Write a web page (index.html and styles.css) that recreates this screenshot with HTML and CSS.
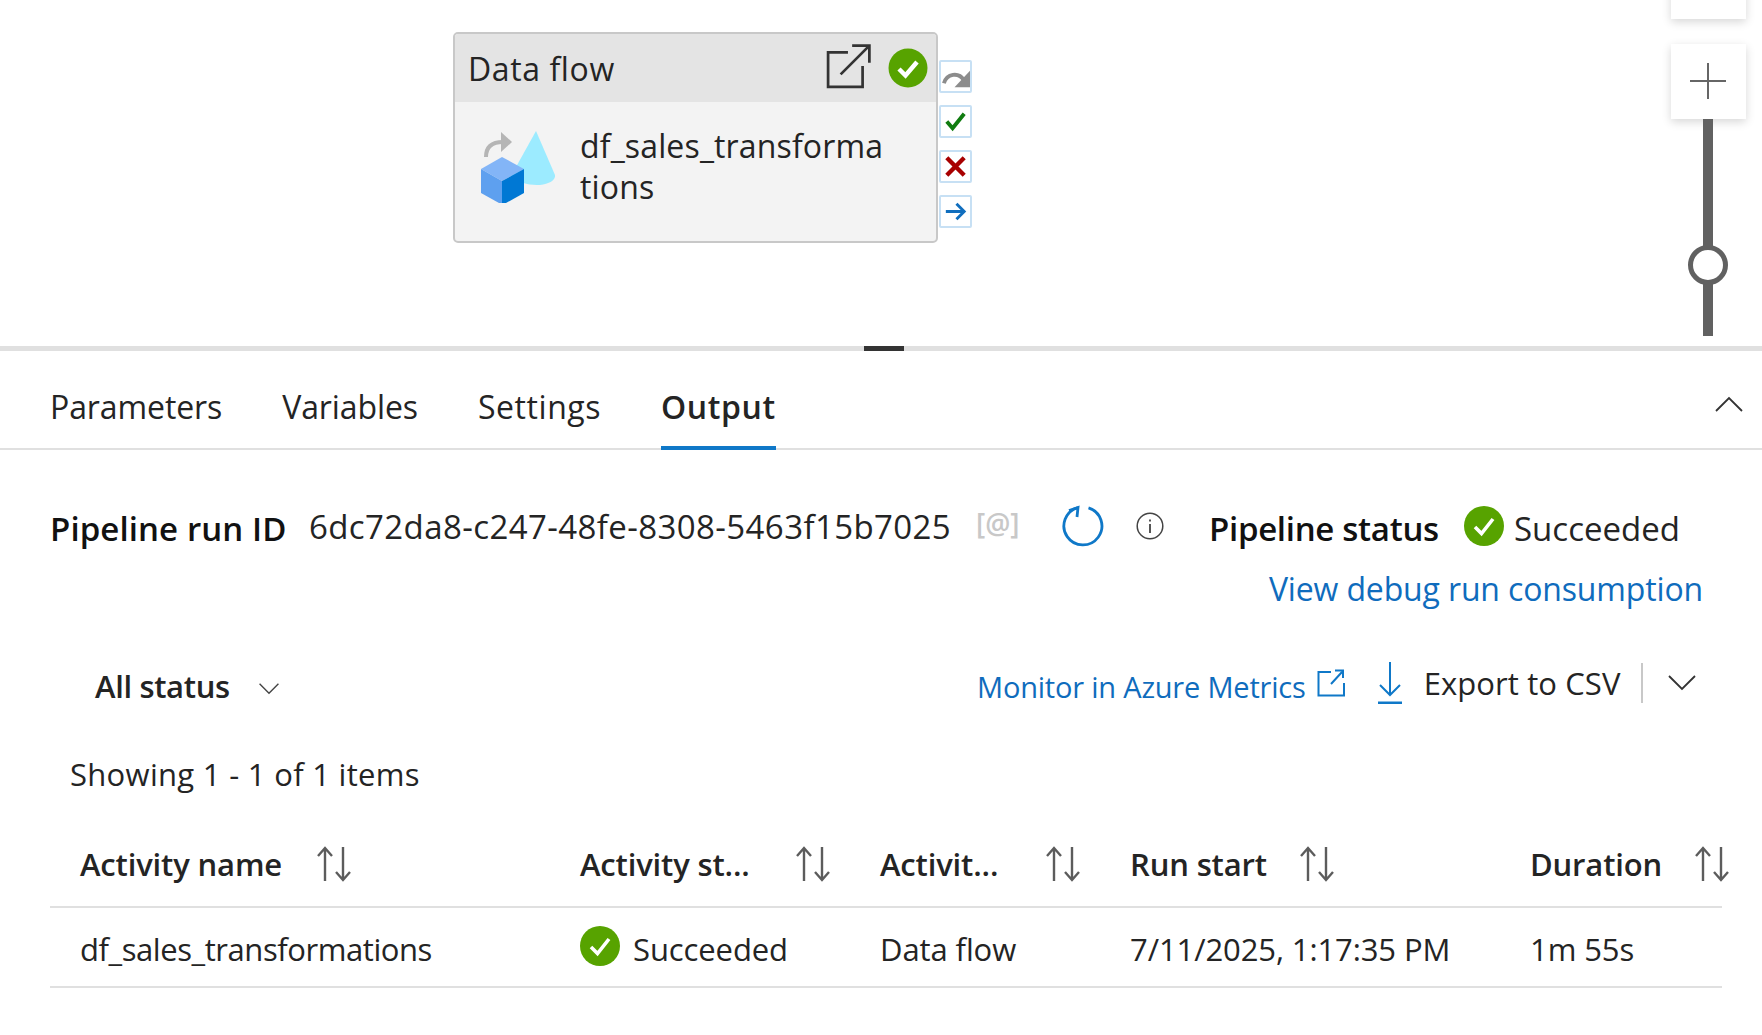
FILE: index.html
```html
<!DOCTYPE html>
<html lang="en">
<head>
<meta charset="UTF-8" />
<title>Pipeline run output</title>
<link rel="stylesheet" href="styles.css">
</head>
<body>

<section class="canvas">
  <div class="node">
    <div class="node-head">
      <span class="node-type">Data flow</span>
      <svg class="node-open" viewBox="0 0 44 44" fill="none" stroke="#333" stroke-width="2.6">
        <path d="M21 9H2v33h33V22"/>
        <path d="M14 30L41 3M25 2.500h16.500V19"/>
      </svg>
      <svg class="node-ok" viewBox="0 0 40 40">
        <circle cx="20" cy="20" r="19.500" fill="#57a300"/>
        <path d="M11 21l6.500 6.500L29 14" fill="none" stroke="#fff" stroke-width="4.500"/>
      </svg>
    </div>
    <div class="node-body">
      <svg class="node-icon" viewBox="0 0 74 72">
        <path d="M55 0L74 44c1 6-9 10-18 10-10 0-20-3-26-9z" fill="#9cebff"/>
        <path d="M5 26c0-10 6-15 17-15" fill="none" stroke="#b5b5b5" stroke-width="4"/>
        <path d="M20 1l11 10-11 10z" fill="#b5b5b5"/>
        <path d="M0 38L21 26l22 12-22 12z" fill="#83b5f7"/>
        <path d="M0 38l21 12v22h-3L0 62z" fill="#5ea0ef"/>
        <path d="M43 38L21 50v22h4l18-10z" fill="#0078d4"/>
      </svg>
      <span class="node-name">df_sales_transforma<br>tions</span>
    </div>
  </div>

  <div class="node-actions">
    <div class="action">
      <svg viewBox="0 0 30 30"><path d="M3 22c3-10 15-12 21-3" fill="none" stroke="#8c8c8c" stroke-width="4"/><path d="M30 9v17H14z" fill="#8c8c8c"/></svg>
    </div>
    <div class="action">
      <svg viewBox="0 0 30 30"><path d="M6 15l6 7L24 7" fill="none" stroke="#107c10" stroke-width="4"/></svg>
    </div>
    <div class="action">
      <svg viewBox="0 0 30 30"><path d="M6 6l18 18M24 6L6 24" fill="none" stroke="#a80000" stroke-width="4.500"/></svg>
    </div>
    <div class="action">
      <svg viewBox="0 0 30 30"><path d="M5 15h19M16 7l8 8-8 8" fill="none" stroke="#106ebe" stroke-width="3"/></svg>
    </div>
  </div>

  <div class="zoom-btn zoom-btn-top"></div>
  <div class="zoom-btn zoom-btn-plus">
    <svg viewBox="0 0 36 36"><path d="M18 0v36M0 18h36" stroke="#666" stroke-width="2"/></svg>
  </div>
  <div class="zoom-track"></div>
  <div class="zoom-thumb"></div>
</section>

<div class="splitter"><span class="splitter-handle"></span></div>

<nav class="tabs">
  <a class="tab">Parameters</a>
  <a class="tab">Variables</a>
  <a class="tab tab-settings">Settings</a>
  <a class="tab tab-active">Output</a>
  <svg class="tabs-collapse" viewBox="0 0 28 16"><path d="M1 15L14 2l13 13" fill="none" stroke="#333" stroke-width="1.800"/></svg>
</nav>

<main class="panel">
  <div class="run-row">
    <span class="label run-label">Pipeline run ID</span>
    <span class="run-id">6dc72da8-c247-48fe-8308-5463f15b7025</span>
    <span class="copy-token">[@]</span>
    <svg class="refresh" viewBox="0 0 42 42" fill="none" stroke="#0f78c8" stroke-width="2.800">
      <path d="M26.500 2.800A19 19 0 1 1 16 2.600"/>
      <path d="M7 5.500L16 2.500 15 12"/>
    </svg>
    <svg class="info" viewBox="0 0 28 28" fill="none" stroke="#444" stroke-width="1.500">
      <circle cx="14" cy="14" r="12.800"/>
      <path d="M14 12v9M14 7.500v2" stroke-width="1.800"/>
    </svg>
    <span class="label status-label">Pipeline status</span>
    <svg class="ok-big" viewBox="0 0 40 40">
      <circle cx="20" cy="20" r="20" fill="#57a300"/>
      <path d="M11 21l6.500 6.500L29 13" fill="none" stroke="#fff" stroke-width="3.600"/>
    </svg>
    <span class="status-text">Succeeded</span>
  </div>

  <div class="debug-row">
    <a class="link debug-link">View debug run consumption</a>
  </div>

  <div class="toolbar">
    <span class="filter">All status</span>
    <svg class="chev filter-chev" viewBox="0 0 24 14"><path d="M1 1l11 11L23 1" fill="none" stroke="#444" stroke-width="1.600"/></svg>
    <a class="link metrics-link">Monitor in Azure Metrics</a>
    <svg class="ext-icon" viewBox="0 0 28 28" fill="none" stroke="#0f78c8" stroke-width="2">
      <path d="M14 3H1.500v23.500H27V14M14 15L25 3M18 1.500h8V9" />
    </svg>
    <svg class="dl-icon" viewBox="0 0 26 42" fill="none" stroke="#0f78c8" stroke-width="2">
      <path d="M13 0v33M3 23l10 10 10-10"/>
      <path d="M1 41h24" stroke-width="3"/>
    </svg>
    <span class="export">Export to CSV</span>
    <span class="toolbar-sep"></span>
    <svg class="chev export-chev" viewBox="0 0 28 16"><path d="M1 1l13 13L27 1" fill="none" stroke="#333" stroke-width="1.800"/></svg>
  </div>

  <p class="showing">Showing 1 - 1 of 1 items</p>

  <div class="grid grid-head">
    <div class="cell cell-head"><span class="head-text head-name">Activity name</span><svg class="sort" viewBox="0 0 36 36" fill="none" stroke="#5c5c5c" stroke-width="2.400"><path d="M9 35V2M2 10l7-8 7 8M27 1v33M20 26l7 8 7-8"/></svg></div>
    <div class="cell cell-head"><span class="head-text head-status">Activity st...</span><svg class="sort" viewBox="0 0 36 36" fill="none" stroke="#5c5c5c" stroke-width="2.400"><path d="M9 35V2M2 10l7-8 7 8M27 1v33M20 26l7 8 7-8"/></svg></div>
    <div class="cell cell-head"><span class="head-text head-type">Activit...</span><svg class="sort" viewBox="0 0 36 36" fill="none" stroke="#5c5c5c" stroke-width="2.400"><path d="M9 35V2M2 10l7-8 7 8M27 1v33M20 26l7 8 7-8"/></svg></div>
    <div class="cell cell-head"><span class="head-text head-start">Run start</span><svg class="sort" viewBox="0 0 36 36" fill="none" stroke="#5c5c5c" stroke-width="2.400"><path d="M9 35V2M2 10l7-8 7 8M27 1v33M20 26l7 8 7-8"/></svg></div>
    <div class="cell cell-head"><span class="head-text head-dur">Duration</span><svg class="sort" viewBox="0 0 36 36" fill="none" stroke="#5c5c5c" stroke-width="2.400"><path d="M9 35V2M2 10l7-8 7 8M27 1v33M20 26l7 8 7-8"/></svg></div>
  </div>
  <div class="grid grid-row">
    <div class="cell cell-name">df_sales_transformations</div>
    <div class="cell">
      <svg class="ok-small" viewBox="0 0 40 40">
        <circle cx="20" cy="20" r="20" fill="#57a300"/>
        <path d="M11 21l6.500 6.500L29 13" fill="none" stroke="#fff" stroke-width="3.600"/>
      </svg>
      Succeeded
    </div>
    <div class="cell">Data flow</div>
    <div class="cell">7/11/2025, 1:17:35 PM</div>
    <div class="cell">1m 55s</div>
  </div>
</main>

</body>
</html>
```

FILE: styles.css
```css
* {
  box-sizing: border-box;
}
html, body {
  margin: 0;
  height: 100%;
  overflow: hidden;
}
body {
  background: #fff;
  color: #242424;
  font-family: "Open Sans", "Noto Sans", sans-serif;
  font-size: 31px;
}

/* canvas */
.canvas {
  position: relative;
  height: 346px;
}
.node {
  position: absolute;
  left: 453px;
  top: 32px;
  width: 485px;
  height: 211px;
  border: 2px solid #c8c8c8;
  border-radius: 5px;
  background: #f3f3f3;
  overflow: hidden;
}
.node-head {
  display: flex;
  align-items: center;
  height: 68px;
  padding: 0 8px 0 13px;
  background: #e4e4e4;
}
.node-type {
  flex: 1;
  font-size: 32px;
  letter-spacing: 0.6px;
}
.node-open {
  width: 46px;
  height: 46px;
  margin: -4px 16px 0 0;
}
.node-ok {
  width: 40px;
  height: 40px;
}
.node-body {
  display: flex;
  padding: 23px 0 0 26px;
}
.node-icon {
  flex: none;
  width: 74px;
  height: 72px;
  margin-top: 6px;
}
.node-name {
  margin-left: 25px;
  font-size: 32px;
  line-height: 41px;
  letter-spacing: 0.15px;
}
.node-actions {
  position: absolute;
  left: 939px;
  top: 60px;
  display: flex;
  flex-direction: column;
  gap: 12px;
}
.action {
  width: 33px;
  height: 33px;
  border: 2px solid #c7e0f4;
  border-radius: 2px;
  background: #fff;
}
.action svg {
  display: block;
  width: 29px;
  height: 29px;
  overflow: visible;
}
.zoom-btn {
  position: absolute;
  left: 1671px;
  width: 75px;
  background: #fff;
  box-shadow: 0 3px 9px rgba(0, 0, 0, 0.16);
}
.zoom-btn-top {
  top: -20px;
  height: 39px;
}
.zoom-btn-plus {
  top: 44px;
  height: 75px;
  padding: 0 2px 2px 0;
  display: flex;
  align-items: center;
  justify-content: center;
}
.zoom-btn-plus svg {
  width: 36px;
  height: 36px;
}
.zoom-track {
  position: absolute;
  left: 1703px;
  top: 119px;
  width: 10px;
  height: 217px;
  background: #616161;
}
.zoom-thumb {
  position: absolute;
  left: 1688px;
  top: 245px;
  width: 40px;
  height: 40px;
  border: 5px solid #616161;
  border-radius: 50%;
  background: #fff;
}

/* splitter */
.splitter {
  display: flex;
  justify-content: center;
  height: 5px;
  background: #e0e0e0;
}
.splitter-handle {
  width: 40px;
  height: 5px;
  margin-right: -6px;
  background: #333;
}

/* tabs */
.tabs {
  position: relative;
  display: flex;
  gap: 60px;
  height: 99px;
  padding-left: 50px;
  border-bottom: 2px solid #e0e0e0;
}
.tab {
  height: 99px;
  padding-top: 34px;
  font-size: 32px;
  letter-spacing: -0.1px;
  line-height: 44px;
}
.tab-settings {
  letter-spacing: 0.55px;
}
.tab-active {
  font-weight: 600;
  letter-spacing: 0.6px;
  border-bottom: 4px solid #0f78c8;
}
.tabs-collapse {
  position: absolute;
  left: 1715px;
  top: 45px;
  width: 28px;
  height: 16px;
}

/* output panel */
.panel {
  padding: 0 40px 0 50px;
}
.label {
  font-weight: 600;
  color: #111;
  font-size: 33px;
  letter-spacing: 0.1px;
}
.run-row {
  display: flex;
  align-items: center;
  height: 56px;
  margin-top: 50px;
}
.run-label {
  width: 259px;
}
.run-id {
  width: 667px;
  font-size: 33px;
  letter-spacing: 0.4px;
  margin-top: -3px;
}
.copy-token {
  width: 86px;
  color: #c8c8c8;
  font-size: 28px;
  font-weight: 600;
  margin-top: -10px;
}
.refresh {
  width: 42px;
  height: 42px;
  margin: -4px 32px 0 0;
}
.info {
  width: 28px;
  height: 28px;
  margin: -4px 45px 0 0;
}
.status-label {
  width: 255px;
  letter-spacing: -0.3px;
}
.ok-big {
  width: 40px;
  height: 40px;
  margin: -4px 10px 0 0;
}
.status-text {
  font-size: 33px;
}
.link {
  color: #0f6cbd;
}
.debug-row {
  display: flex;
  justify-content: flex-end;
  padding-right: 19px;
  height: 44px;
  margin-top: 11px;
}
.debug-link {
  font-size: 32px;
  letter-spacing: -0.15px;
}
.toolbar {
  display: flex;
  align-items: center;
  height: 50px;
  margin-top: 50px;
  padding-left: 45px;
}
.filter {
  width: 163px;
  font-weight: 600;
  letter-spacing: -0.35px;
}
.filter-chev {
  width: 22px;
  height: 12px;
  margin-top: 6px;
}
.metrics-link {
  margin-left: 697px;
  font-size: 29px;
  letter-spacing: -0.2px;
  white-space: nowrap;
}
.ext-icon {
  width: 28px;
  height: 28px;
  margin: -6px 0 0 11px;
}
.dl-icon {
  width: 26px;
  height: 42px;
  margin: -6px 0 0 32px;
}
.export {
  margin: -7px 0 0 21px;
  letter-spacing: 0.1px;
  white-space: nowrap;
}
.toolbar-sep {
  width: 2px;
  height: 40px;
  margin: -6px 0 0 20px;
  background: #c8c8c8;
}
.export-chev {
  width: 28px;
  height: 16px;
  margin: -6px 0 0 25px;
}
.showing {
  margin: 41px 0 0 20px;
  height: 44px;
  line-height: 44px;
  font-size: 31px;
  letter-spacing: 0.3px;
}

/* table */
.grid {
  display: grid;
  grid-template-columns: 500px 300px 250px 400px 222px;
  width: 1672px;
  border-bottom: 2px solid #e0e0e0;
  padding-left: 30px;
}
.grid-head {
  height: 84px;
  padding-bottom: 3px;
  margin-top: 28px;
  align-items: center;
  font-weight: 600;
}
.grid-row {
  height: 80px;
  padding-top: 4px;
  align-items: center;
  letter-spacing: -0.1px;
}
.cell {
  display: flex;
  align-items: center;
  white-space: nowrap;
}
.cell-name {
  letter-spacing: -0.43px;
}
.head-text {
  letter-spacing: -0.15px;
  font-size: 31px;
}
.head-name {
  width: 236px;
}
.head-status {
  width: 215px;
}
.head-type {
  width: 165px;
}
.head-start {
  width: 169px;
}
.head-dur {
  width: 164px;
}
.sort {
  width: 36px;
  height: 36px;
  flex: none;
}
.ok-small {
  width: 40px;
  height: 40px;
  margin: -6px 13px 0 0;
}
```
